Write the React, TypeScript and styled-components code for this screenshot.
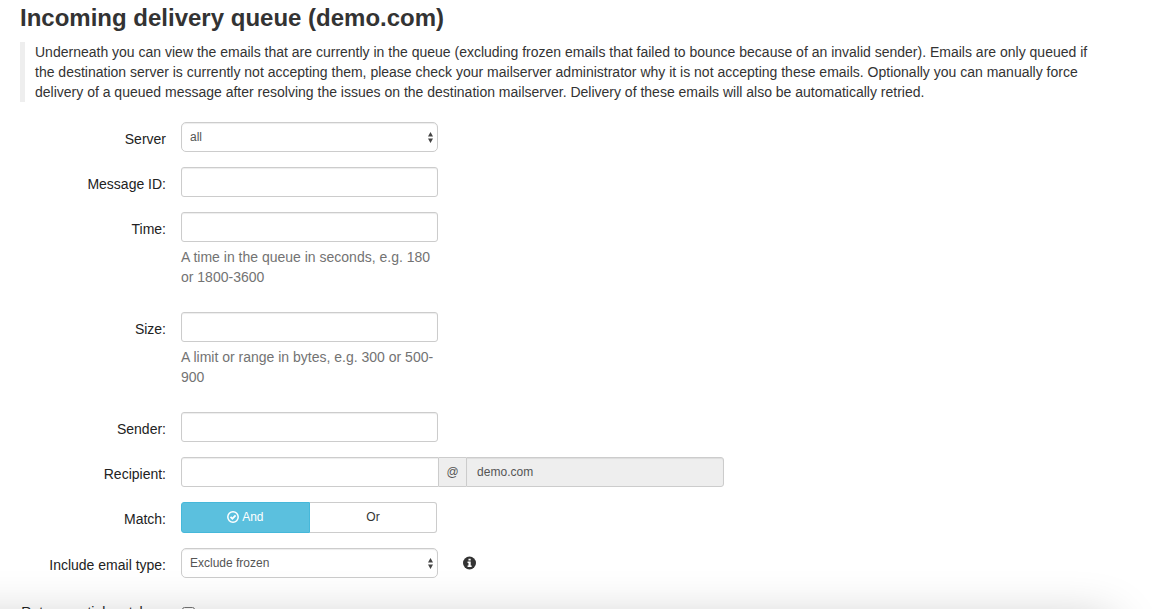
import React from "react";
import styled, { createGlobalStyle } from "styled-components";

const GlobalStyle = createGlobalStyle`
  *, *::before, *::after { box-sizing: border-box; }
  body {
    margin: 0;
    background: #fff;
    color: #333;
    font: 14px/20px "Liberation Sans", Arial, sans-serif;
  }
`;

const Page = styled.main`
  height: 100vh;
  overflow: hidden;
  padding: 4px 20px 0;
`;

const Title = styled.h1`
  margin: 0 0 10px;
  font-size: 24px;
  line-height: 28px;
  font-weight: bold;
`;

const Intro = styled.blockquote`
  margin: 0 0 20px;
  padding: 0 0 0 10px;
  border-left: 5px solid #eee;
`;

const IntroLine = styled.span`
  display: block;
`;

const Form = styled.form`
  display: flex;
  flex-direction: column;
  gap: 15px;
`;

const Row = styled.div`
  display: grid;
  grid-template-columns: 146px minmax(0, 1fr);
  column-gap: 15px;
`;

const CheckRow = styled(Row)`
  padding-top: 2px;
`;

const Label = styled.label`
  padding-top: 7px;
  text-align: right;
  white-space: nowrap;
  color: #222;
`;

const Field = styled.div<{ $wide?: boolean }>`
  width: ${(p) => (p.$wide ? "57%" : "27%")};
`;

const Input = styled.input`
  display: block;
  width: 100%;
  height: 30px;
  padding: 5px 10px;
  border: 1px solid #ccc;
  border-radius: 3px;
  background: #fff;
  box-shadow: inset 0 1px 1px rgba(0, 0, 0, 0.075);
  color: #555;
  font: inherit;
  font-size: 12px;
  line-height: 18px;
  &:disabled { background: #eee; }
`;

const Help = styled.p`
  margin: 5px 0 10px;
  color: #737373;
`;

const SelectBox = styled.div`
  position: relative;
`;

const Select = styled.select`
  display: block;
  appearance: none;
  width: 100%;
  height: 30px;
  padding: 0 20px 0 8px;
  border: 1px solid #ccc;
  border-radius: 5px;
  background: #fff;
  box-shadow: inset 0 1px 1px rgba(0, 0, 0, 0.075);
  color: #555;
  font: inherit;
  font-size: 12px;
`;

const Arrows = styled.svg`
  position: absolute;
  top: 10px;
  right: 5px;
  pointer-events: none;
`;

const Group = styled.div`
  display: flex;
  ${Input} { flex: 1 1 0; min-width: 0; }
  ${Input}:first-child { border-radius: 3px 0 0 3px; }
  ${Input}:last-child { border-radius: 0 3px 3px 0; }
`;

const Addon = styled.span`
  width: 27px;
  border: 1px solid #ccc;
  border-width: 1px 0;
  background: #eee;
  color: #555;
  font-size: 12px;
  line-height: 28px;
  text-align: center;
`;

const Toggle = styled.div`
  display: flex;
  margin-right: 1px;
`;

const ToggleButton = styled.button<{ $active?: boolean }>`
  display: flex;
  flex: 1 1 0;
  align-items: center;
  justify-content: center;
  gap: 3px;
  height: 31px;
  padding: 0 0 2px;
  border: 1px solid ${(p) => (p.$active ? "#46b8da" : "#ccc")};
  border-left-width: ${(p) => (p.$active ? "1px" : "0")};
  border-radius: ${(p) => (p.$active ? "3px 0 0 3px" : "0 3px 3px 0")};
  background: ${(p) => (p.$active ? "#5bc0de" : "#fff")};
  color: ${(p) => (p.$active ? "#fff" : "#333")};
  font: inherit;
  font-size: 12px;
`;

const WithInfo = styled.div`
  display: flex;
  align-items: center;
  gap: 25px;
`;

const InfoButton = styled.button`
  display: flex;
  padding: 0;
  border: 0;
  background: none;
  color: #333;
`;

const Checkbox = styled.input`
  display: block;
  width: 13px;
  height: 13px;
  margin: 12px 0 0 1px;
`;

const BottomShade = styled.div`
  position: fixed;
  top: calc(100% + 12px);
  left: -60px;
  right: 42px;
  height: 100px;
  box-shadow: 0 0 50px rgba(0, 0, 0, 0.24);
  pointer-events: none;
`;

const UpDown = () => (
  <Arrows width="5" height="11" viewBox="0 0 5 11" fill="#444" aria-hidden="true">
    <path d="M2.5 0 5 4.5H0zM2.5 11 0 6.5h5z" />
  </Arrows>
);

const CheckCircle = () => (
  <svg width="12" height="12" viewBox="0 0 12 12" fill="none" stroke="currentColor" aria-hidden="true">
    <circle cx="6" cy="6" r="5.2" strokeWidth="1.5" />
    <path d="M3.5 5.9 5.4 7.7 8.6 4.4" strokeWidth="1.8" />
  </svg>
);

const InfoCircle = () => (
  <svg width="13" height="14" viewBox="0 0 14 14" aria-hidden="true">
    <circle cx="7" cy="7" r="7" fill="currentColor" />
    <path fill="#fff" d="M5.9 2.3h2.4v2H5.9zM4.9 5.3h3.4v4.4h1v1.6H4.9V9.7h1V6.9h-1z" />
  </svg>
);

export default function App() {
  return (
    <Page>
      <GlobalStyle />
      <Title>Incoming delivery queue (demo.com)</Title>
      <Intro>
        <IntroLine>
          Underneath you can view the emails that are currently in the queue (excluding frozen emails that failed to
          bounce because of an invalid sender). Emails are only queued if
        </IntroLine>
        <IntroLine>
          the destination server is currently not accepting them, please check your mailserver administrator why it is
          not accepting these emails. Optionally you can manually force
        </IntroLine>
        <IntroLine>
          delivery of a queued message after resolving the issues on the destination mailserver. Delivery of these
          emails will also be automatically retried.
        </IntroLine>
      </Intro>
      <Form onSubmit={(e) => e.preventDefault()}>
        <Row>
          <Label htmlFor="server">Server</Label>
          <Field>
            <SelectBox>
              <Select id="server"><option>all</option></Select>
              <UpDown />
            </SelectBox>
          </Field>
        </Row>
        <Row>
          <Label htmlFor="message-id">Message ID:</Label>
          <Field><Input id="message-id" /></Field>
        </Row>
        <Row>
          <Label htmlFor="time">Time:</Label>
          <Field>
            <Input id="time" />
            <Help>A time in the queue in seconds, e.g. 180 or 1800-3600</Help>
          </Field>
        </Row>
        <Row>
          <Label htmlFor="size">Size:</Label>
          <Field>
            <Input id="size" />
            <Help>A limit or range in bytes, e.g. 300 or 500-900</Help>
          </Field>
        </Row>
        <Row>
          <Label htmlFor="sender">Sender:</Label>
          <Field><Input id="sender" /></Field>
        </Row>
        <Row>
          <Label htmlFor="recipient">Recipient:</Label>
          <Field $wide>
            <Group>
              <Input id="recipient" />
              <Addon>@</Addon>
              <Input aria-label="Domain" defaultValue="demo.com" disabled />
            </Group>
          </Field>
        </Row>
        <Row>
          <Label as="span" id="match">Match:</Label>
          <Field>
            <Toggle role="group" aria-labelledby="match">
              <ToggleButton type="button" $active aria-pressed="true"><CheckCircle />And</ToggleButton>
              <ToggleButton type="button" aria-pressed="false">Or</ToggleButton>
            </Toggle>
          </Field>
        </Row>
        <Row>
          <Label htmlFor="email-type">Include email type:</Label>
          <WithInfo>
            <Field>
              <SelectBox>
                <Select id="email-type"><option>Exclude frozen</option></Select>
                <UpDown />
              </SelectBox>
            </Field>
            <InfoButton type="button" aria-label="About email types"><InfoCircle /></InfoButton>
          </WithInfo>
        </Row>
        <CheckRow>
          <Label htmlFor="partial">Return partial matches:</Label>
          <Field><Checkbox id="partial" type="checkbox" /></Field>
        </CheckRow>
      </Form>
      <BottomShade />
    </Page>
  );
}
